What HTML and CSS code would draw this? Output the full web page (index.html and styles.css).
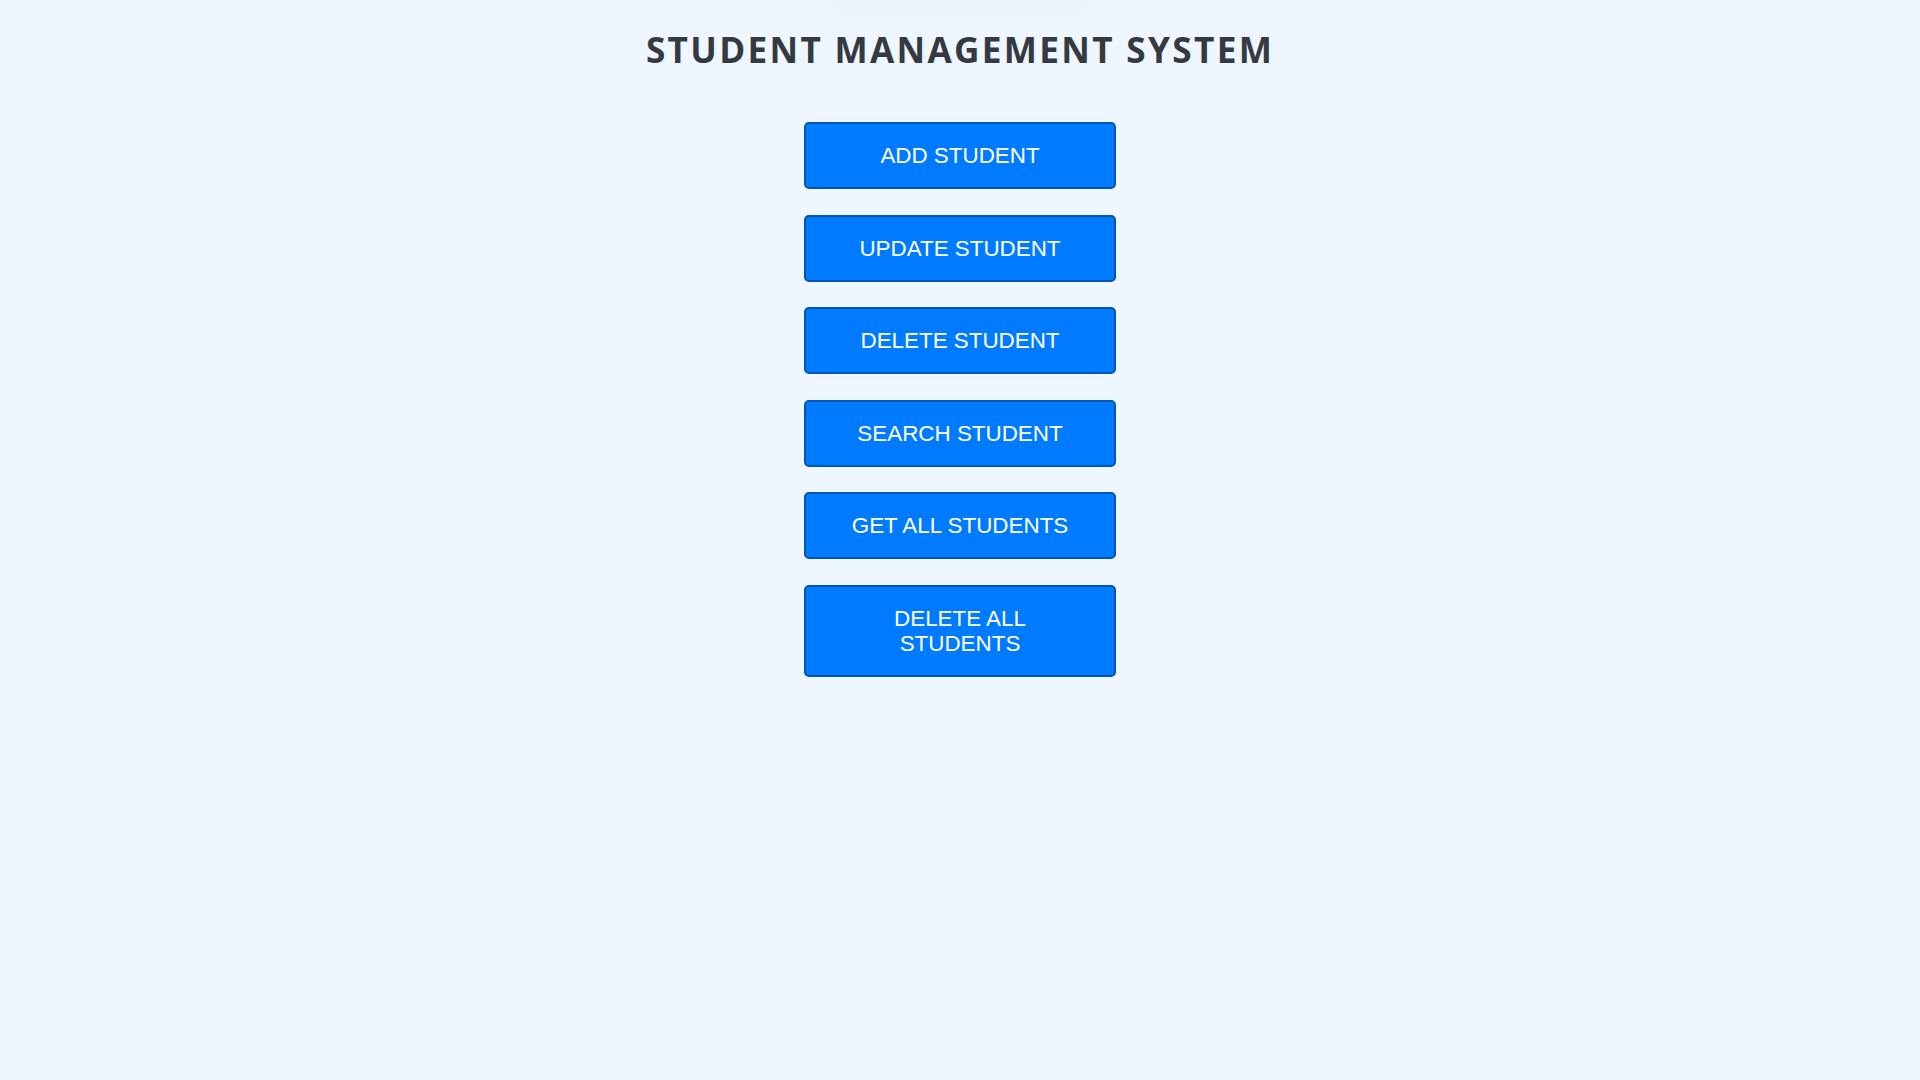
FILE: index.html
```html
<!DOCTYPE html>
<html lang="en">
<head>
<meta charset="utf-8">
<title>Student Management System</title>
<link rel="stylesheet" href="styles.css">
</head>
<body>
<div class="top-shadow"></div>
<main class="app">
  <h1 class="title">STUDENT MANAGEMENT SYSTEM</h1>
  <nav class="menu">
    <button class="btn">ADD STUDENT</button>
    <button class="btn">UPDATE STUDENT</button>
    <button class="btn">DELETE STUDENT</button>
    <button class="btn">SEARCH STUDENT</button>
    <button class="btn">GET ALL STUDENTS</button>
    <button class="btn">DELETE ALL STUDENTS</button>
  </nav>
</main>
</body>
</html>
```
FILE: styles.css
```css
html, body {
  margin: 0;
  padding: 0;
  background: #eef6ff;
  min-height: 100%;
}
body {
  font-family: "Open Sans", "Liberation Sans", sans-serif;
}
.top-shadow {
  width: 250px;
  height: 0;
  margin: 0 auto;
  box-shadow: 0 0 22px 3px rgba(50, 70, 100, 0.1);
}
.app {
  display: flex;
  flex-direction: column;
  align-items: center;
  padding-top: 25px;
}
.title {
  margin: 0;
  font-family: "Open Sans", sans-serif;
  font-weight: 700;
  font-size: 35.2px;
  line-height: 48px;
  letter-spacing: 2.3px;
  color: #343a40;
}
.menu {
  display: flex;
  flex-direction: column;
  align-items: center;
  gap: 25.6px;
  margin-top: 49px;
}
.btn {
  width: 312px;
  box-sizing: border-box;
  padding: 19px 40px;
  border: 2px solid #0056b3;
  border-radius: 5px;
  background: #007bff;
  color: #ffffff;
  font-family: "Liberation Sans", Arial, sans-serif;
  font-size: 22.4px;
  line-height: 25px;
  text-align: center;
  cursor: pointer;
}
```
